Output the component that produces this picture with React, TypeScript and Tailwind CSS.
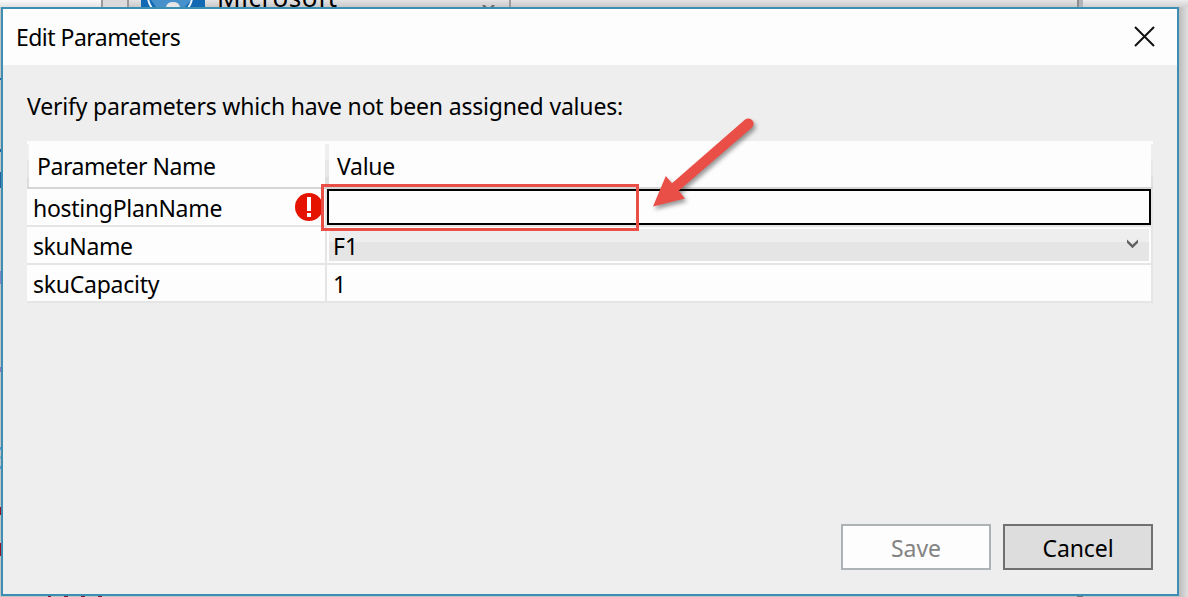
import React from 'react';

function Marker({ className }: { className: string }) {
  return <span className={`absolute left-0 w-px ${className}`} />;
}

function Backdrop() {
  return (
    <div className="absolute inset-0 bg-[#c4c4c4]" aria-hidden="true">
      <div className="flex h-[7px] overflow-hidden bg-linear-to-b from-[#e3e3e3] to-[#c9c9c9]">
        <div className="w-[101px] shrink-0 bg-linear-to-b from-[#fafafa] to-[#e2e2e2]" />
        <div className="w-[2px] shrink-0 bg-[#999999]" />
        <div className="w-[24px] shrink-0 bg-[#dadada]" />
        <div className="w-[2px] shrink-0 bg-[#999999]" />
        <div className="w-[12px] shrink-0" />
        <svg className="h-[7px] w-[64px] shrink-0 bg-[#1169b3]" viewBox="0 0 64 7">
          <path d="M10 0H50L44 7H15Z" fill="#4690cc" />
          <path d="M7 -1Q8 4 11 8M51 -1Q50 4 47 8" fill="none" stroke="#e8f0f8" strokeWidth="2" />
          <path d="M25 7Q26 2 32 2T39 7" fill="#e5e5e5" />
        </svg>
        <div className="w-[12px] shrink-0" />
        <div className="relative w-[294px] shrink-0 border-r-2 border-[#9b9b9b]">
          <span className="absolute top-[-21px] left-0 text-[26px] leading-[36px] tracking-[0.6px]">Microsoft</span>
          <svg className="absolute top-[5px] left-[265px] h-[7px] w-[13px]" viewBox="0 0 13 7">
            <path d="M1 0L6.5 5L12 0" fill="none" stroke="#666" strokeWidth="2.2" />
          </svg>
        </div>
        <div className="flex-1" />
        <div className="w-[2px] shrink-0 bg-[#8d8d8d]" />
        <div className="w-[4px] shrink-0 bg-[#b1b4b9]" />
        <div className="w-[105px] shrink-0 bg-linear-to-b from-[#ececec] to-[#d2d2d2]" />
      </div>
      <div className="absolute top-[7px] right-0 bottom-0 w-[9px] bg-linear-to-r from-[#bcbcbc] to-[#e1e1e1]" />
      <Marker className="top-[78px] h-[2px] bg-[#24619d]" />
      <Marker className="top-[149px] h-[3px] bg-[#24619d]" />
      <Marker className="top-[172px] h-[16px] bg-[#24619d]" />
      <Marker className="top-[271px] h-[13px] bg-[#8c83c4]" />
      <Marker className="top-[367px] h-[5px] bg-[#9a70b8]" />
      <Marker className="top-[507px] h-[8px] bg-[#991022]" />
      <Marker className="top-[447px] h-[3px] bg-[#5799cb]" />
      <Marker className="top-[456px] h-[3px] bg-[#86b2c8]" />
      <Marker className="top-[466px] h-[3px] bg-[#5799cb]" />
      <Marker className="top-[543px] h-[13px] bg-[#991022]" />
      <div className="absolute bottom-0 left-[48px] flex h-px gap-[13px]">
        <span className="w-[3px] bg-[#80152c]" />
        <span className="w-[4px] bg-[#80152c]" />
        <span className="w-[4px] bg-[#80152c]" />
        <span className="w-[4px] bg-[#80152c]" />
      </div>
      <div className="absolute bottom-0 left-[1077px] h-px w-[6px] bg-[#777777]" />
    </div>
  );
}

function HeaderEdge({ className }: { className: string }) {
  return (
    <div className={`flex shrink-0 flex-col pt-[3px] ${className}`}>
      <div className="h-[16px] bg-[#efefef]" />
      <div className="h-[17px] bg-[#e7e7e7]" />
      <div className="flex-1 bg-[#dedede]" />
    </div>
  );
}

function ErrorIcon() {
  return (
    <svg className="mt-[4px] mr-[2px] size-[28px] shrink-0" viewBox="0 0 28 28">
      <circle cx="14" cy="14" r="14" fill="#e51400" />
      <path d="M12 4h4v14h-4zM12 20h4v4h-4z" fill="#fff" />
    </svg>
  );
}

function ParameterTable() {
  return (
    <div className="relative w-[1126px]">
      <div className="flex h-[48px] border-b-2 border-[#d5d5d5] bg-[#fdfdfd]">
        <HeaderEdge className="w-[2px]" />
        <div className="w-[296px] pt-[9px] pl-[8px] leading-[32px] tracking-[-0.45px]">Parameter Name</div>
        <HeaderEdge className="w-[4px]" />
        <div className="flex-1 pt-[9px] pl-[8px] leading-[32px] tracking-[-0.3px]">Value</div>
        <HeaderEdge className="w-[2px]" />
      </div>
      <div className="flex h-[38px] border-r-2 border-b-2 border-[#e5e5e5] bg-[#fdfdfd]">
        <div className="flex w-[298px] justify-between pl-[6px]">
          <span className="mt-[3px] leading-[32px] tracking-[-0.3px]">hostingPlanName</span>
          <ErrorIcon />
        </div>
        <div className="w-[2px] bg-[#e5e5e5]" />
        <div className="flex-1 border-2 border-black" />
      </div>
      <div className="flex h-[38px] border-r-2 border-b-2 border-[#e5e5e5] bg-[#fdfdfd]">
        <div className="w-[298px] pt-[3px] pl-[6px] leading-[32px] tracking-[-0.4px]">skuName</div>
        <div className="w-[2px] bg-[#e5e5e5]" />
        <div className="flex-1 p-[2px]">
          <div className="flex h-[32px] justify-between bg-linear-to-b from-[#eeeeee] from-[13px] to-[#e5e5e5] to-[13px] pr-[11px] pl-[4px]">
            <span className="mt-[1px] leading-[32px]">F1</span>
            <svg className="mt-[10px] h-[10px] w-[11px]" viewBox="0 0 11 10">
              <path d="M0 0.5L5.5 5.8L11 0.5V3.8L5.5 9.2L0 3.8Z" fill="#606060" />
            </svg>
          </div>
        </div>
      </div>
      <div className="flex h-[38px] border-r-2 border-b-2 border-[#e5e5e5] bg-[#fdfdfd]">
        <div className="w-[298px] pt-[3px] pl-[6px] leading-[32px] tracking-[-0.25px]">skuCapacity</div>
        <div className="w-[2px] bg-[#e5e5e5]" />
        <div className="pt-[3px] pl-[6px] leading-[32px]">1</div>
      </div>
      <div className="absolute top-[43px] left-[294px] h-[47px] w-[318px] border-3 border-[#e94f47]" />
      <svg className="absolute top-[-31px] left-[613px] h-[110px] w-[130px] overflow-visible drop-shadow-[2px_3px_2px_rgba(0,0,0,0.4)]" viewBox="640 110 130 110">
        <path d="M653 206.5L665.8 176L672 183.2L744.8 119.7A5.3 5.3 0 0 1 751.8 127.7L678.7 190.7L685 198.5Z" fill="#e94f47" />
      </svg>
    </div>
  );
}

export default function App() {
  return (
    <div className="relative h-[597px] w-[1188px] overflow-hidden font-['Noto_Sans','Open_Sans',sans-serif] text-[23px] text-black">
      <Backdrop />
      <div className="relative pt-[7px] pl-px">
        <div className="flex h-[589px] w-[1178px] flex-col border-2 border-[#3c8fb3] bg-[#eeeeee]">
          <header className="flex h-[56px] shrink-0 items-start justify-between bg-[#fdfdfd] pr-[22.5px] pl-[13px]">
            <h1 className="mt-[12px] leading-[32px] tracking-[-0.53px]">Edit Parameters</h1>
            <svg className="mt-[16.5px] size-[21px]" viewBox="0 0 21 21">
              <path d="M1 1L20 20M20 1L1 20" stroke="#111" strokeWidth="2" />
            </svg>
          </header>
          <main className="flex flex-1 flex-col pr-[24px] pb-[24px] pl-[24px]">
            <p className="mt-[25px] mb-[19px] leading-[32px] tracking-[-0.18px] whitespace-nowrap">
              Verify parameters which have not been assigned values:
            </p>
            <ParameterTable />
            <div className="mt-auto flex justify-end gap-[12px]">
              <button className="h-[46px] w-[150px] border-2 border-[#adb2b5] bg-[#fdfdfd] pt-[3px] text-[#838383]" disabled>Save</button>
              <button className="h-[46px] w-[150px] border-2 border-[#707070] bg-[#dddddd] pt-[3px] tracking-[-0.1px]">Cancel</button>
            </div>
          </main>
        </div>
      </div>
    </div>
  );
}
